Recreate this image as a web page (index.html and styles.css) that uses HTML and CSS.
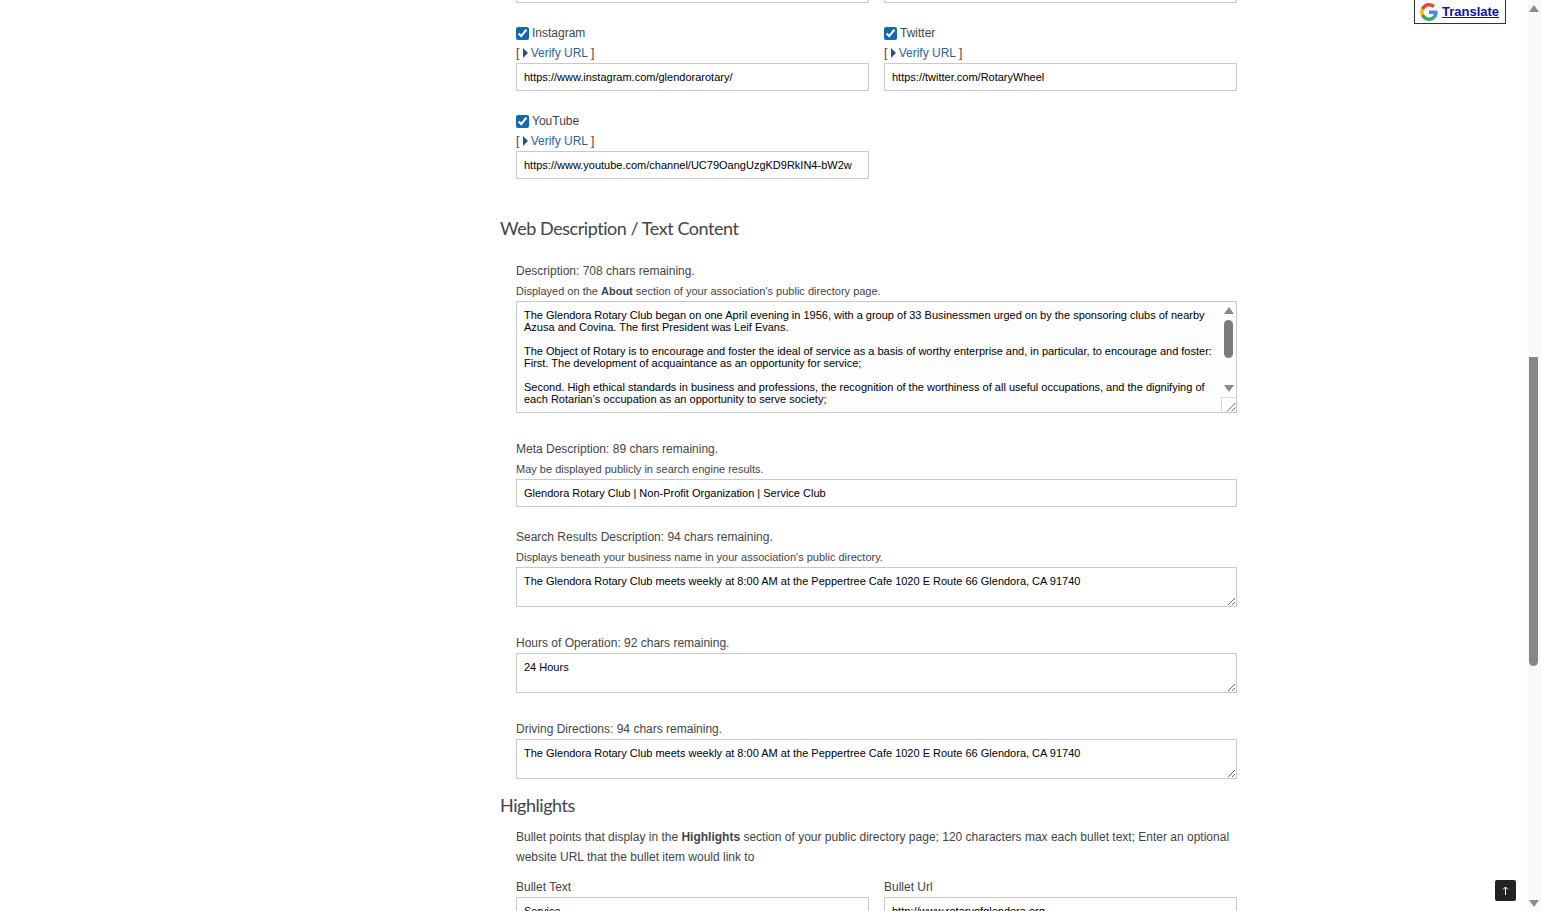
FILE: index.html
```html
<!DOCTYPE html>
<html lang="en">
<head>
    <meta charset="UTF-8">
    <title>Edit Listing</title>
    <link rel="stylesheet" href="styles.css">
</head>
<body>

    <div class="page">
        <div class="form-column">

            <div class="field-row field-row-cut">
                <div class="field"><input type="text" class="text-input"></div>
                <div class="field"><input type="text" class="text-input"></div>
            </div>

            <div class="field-row">
                <div class="field">
                    <label class="check-label"><input type="checkbox" checked> Instagram</label>
                    <div class="verify">[ <a href="#"><span class="verify-arrow"></span>Verify URL</a> ]</div>
                    <input type="text" class="text-input" value="https://www.instagram.com/glendorarotary/">
                </div>
                <div class="field">
                    <label class="check-label"><input type="checkbox" checked> Twitter</label>
                    <div class="verify">[ <a href="#"><span class="verify-arrow"></span>Verify URL</a> ]</div>
                    <input type="text" class="text-input" value="https://twitter.com/RotaryWheel">
                </div>
            </div>

            <div class="field-row">
                <div class="field">
                    <label class="check-label"><input type="checkbox" checked> YouTube</label>
                    <div class="verify">[ <a href="#"><span class="verify-arrow"></span>Verify URL</a> ]</div>
                    <input type="text" class="text-input" value="https://www.youtube.com/channel/UC79OangUzgKD9RkIN4-bW2w">
                </div>
            </div>

            <h2 class="section-title section-web">Web Description / Text Content</h2>

            <div class="block">
                <div class="label">Description: 708 chars remaining.</div>
                <div class="hint">Displayed on the <b>About</b> section of your association's public directory page.</div>
                <div class="area-wrap">
                    <textarea class="text-area area-description">The Glendora Rotary Club began on one April evening in 1956, with a group of 33 Businessmen urged on by the sponsoring clubs of nearby Azusa and Covina. The first President was Leif Evans.

The Object of Rotary is to encourage and foster the ideal of service as a basis of worthy enterprise and, in particular, to encourage and foster:
First. The development of acquaintance as an opportunity for service;

Second. High ethical standards in business and professions, the recognition of the worthiness of all useful occupations, and the dignifying of each Rotarian’s occupation as an opportunity to serve society;</textarea>
                    <div class="area-scroll">
                        <span class="tri tri-up"></span>
                        <span class="area-thumb"></span>
                        <span class="tri tri-down"></span>
                    </div>
                    <div class="area-grip">
                        <svg width="14" height="14" viewBox="0 0 14 14"><path d="M5 13.500 13.500 5M9.500 13.500l4-4" stroke="#666" stroke-width="1" fill="none"/></svg>
                    </div>
                </div>
            </div>

            <div class="block block-input">
                <div class="label">Meta Description: 89 chars remaining.</div>
                <div class="hint">May be displayed publicly in search engine results.</div>
                <input type="text" class="text-input" value="Glendora Rotary Club | Non-Profit Organization | Service Club">
            </div>

            <div class="block">
                <div class="label">Search Results Description: 94 chars remaining.</div>
                <div class="hint">Displays beneath your business name in your association's public directory.</div>
                <textarea class="text-area">The Glendora Rotary Club meets weekly at 8:00 AM at the Peppertree Cafe 1020 E Route 66 Glendora, CA 91740</textarea>
            </div>

            <div class="block">
                <div class="label">Hours of Operation: 92 chars remaining.</div>
                <textarea class="text-area">24 Hours</textarea>
            </div>

            <div class="block block-last">
                <div class="label">Driving Directions: 94 chars remaining.</div>
                <textarea class="text-area">The Glendora Rotary Club meets weekly at 8:00 AM at the Peppertree Cafe 1020 E Route 66 Glendora, CA 91740</textarea>
            </div>

            <h2 class="section-title section-highlights">Highlights</h2>

            <p class="intro">Bullet points that display in the <b>Highlights</b> section of your public directory page; 120 characters max each bullet text; Enter an optional website URL that the bullet item would link to</p>

            <div class="field-row">
                <div class="field">
                    <div class="label">Bullet Text</div>
                    <input type="text" class="text-input" value="Service">
                </div>
                <div class="field">
                    <div class="label">Bullet Url</div>
                    <input type="text" class="text-input" value="http://www.rotaryofglendora.org">
                </div>
            </div>

        </div>

        <div class="page-scroll">
            <span class="tri tri-up"></span>
            <span class="page-thumb"></span>
            <span class="tri tri-down"></span>
        </div>
    </div>

    <div class="translate-badge">
        <svg width="18" height="18" viewBox="0 0 48 48">
            <path fill="#EA4335" d="M24 9.500c3.500 0 6.700 1.300 9.100 3.500l6.800-6.800C35.800 2.400 30.300 0 24 0 14.600 0 6.500 5.400 2.600 13.200l7.900 6.100C12.400 13.700 17.700 9.500 24 9.500z"/>
            <path fill="#4285F4" d="M47 24.500c0-1.600-.1-3.100-.4-4.500H24v9h12.900c-.6 3-2.300 5.500-4.800 7.200l7.700 6C44.300 37.900 47 31.800 47 24.500z"/>
            <path fill="#FBBC05" d="M10.500 28.700c-.5-1.500-.8-3-.8-4.700s.3-3.200.8-4.700l-7.900-6.100C.9 16.500 0 20.100 0 24s.9 7.500 2.600 10.800l7.900-6.100z"/>
            <path fill="#34A853" d="M24 48c6.500 0 11.900-2.100 15.800-5.800l-7.700-6c-2.100 1.400-4.900 2.300-8.100 2.300-6.300 0-11.600-4.200-13.500-9.800l-7.900 6.100C6.500 42.600 14.600 48 24 48z"/>
        </svg>
        <a href="#">Translate</a>
    </div>

    <button class="to-top">
        <svg width="7" height="9" viewBox="0 0 7 9"><path d="M3.500 9V1M1 3.500 3.500 1 6 3.500" stroke="#fff" stroke-width="1" fill="none"/></svg>
    </button>

</body>
</html>
```

FILE: styles.css
```css
html, body {
    margin: 0;
    height: 100%;
    overflow: hidden;
    background-color: #fff;
}
body {
    font-family: "Liberation Sans", Arial, sans-serif;
    font-size: 12px;
    color: #444;
}
a {
    color: #2a6592;
    text-decoration: none;
}

.page {
    display: flex;
    height: 911px;
}
.form-column {
    flex: 1;
    padding-left: 500px;
    overflow: hidden;
}

/* two column rows */
.field-row {
    display: flex;
    gap: 15px;
    width: 721px;
    margin-left: 16px;
    margin-bottom: 20px;
}
.field-row-cut {
    margin-top: -25px;
}
.field {
    width: 353px;
}
.check-label {
    display: flex;
    align-items: center;
    height: 20px;
    line-height: 20px;
    gap: 3px;
}
.check-label input {
    width: 13px;
    height: 13px;
    margin: 1px 0 0 0;
    accent-color: #1268b3;
}
.verify {
    height: 20px;
    line-height: 20px;
}
.verify-arrow {
    display: inline-block;
    width: 0;
    height: 0;
    margin: 0 3px 0 0;
    vertical-align: -1px;
    border-left: 5px solid #1d5b79;
    border-top: 5px solid transparent;
    border-bottom: 5px solid transparent;
}

.text-input {
    display: block;
    box-sizing: border-box;
    width: 100%;
    height: 28px;
    padding: 0 7px;
    margin: 0;
    border: 1px solid #c8c8c8;
    outline: none;
    background-color: #fff;
    color: #000;
    font-family: "Liberation Sans", Arial, sans-serif;
    font-size: 11px;
}

.section-title {
    margin: 0;
    height: 30px;
    line-height: 30px;
    font-family: Lato, "Liberation Sans", sans-serif;
    font-size: 18px;
    font-weight: normal;
    letter-spacing: -0.45px;
    word-spacing: 0;
    color: #444;
}
.section-web {
    margin-top: 34px;
    margin-bottom: 18px;
}
.section-highlights {
    margin-top: 11px;
    margin-bottom: 7px;
}

.block {
    width: 721px;
    margin-left: 16px;
    margin-bottom: 26px;
}
.block-input {
    margin-bottom: 20px;
}
.block-last {
    margin-bottom: 0;
}
.label {
    height: 20px;
    line-height: 20px;
}
.hint {
    height: 20px;
    line-height: 20px;
    font-size: 11px;
}

.text-area {
    display: block;
    box-sizing: border-box;
    width: 100%;
    height: 40px;
    padding: 7px;
    margin: 0;
    border: 1px solid #c8c8c8;
    outline: none;
    resize: vertical;
    background-color: #fff;
    color: #000;
    font-family: "Liberation Sans", Arial, sans-serif;
    font-size: 11px;
    line-height: 12px;
}
.area-wrap {
    position: relative;
}
.area-description {
    height: 112px;
    padding-right: 22px;
    overflow: hidden;
    resize: none;
    background-color: #fdfdfd;
}
.area-scroll {
    position: absolute;
    top: 1px;
    right: 1px;
    width: 15px;
    height: 94px;
    display: flex;
    flex-direction: column;
    align-items: center;
}
.area-thumb {
    width: 9px;
    height: 38px;
    margin: 6px 0 auto;
    border-radius: 5px;
    background-color: #7c7c7c;
}
.area-grip {
    position: absolute;
    right: 1px;
    bottom: 1px;
    box-sizing: border-box;
    width: 15px;
    height: 15px;
    border-left: 1px solid #d8d8d8;
    border-top: 1px solid #d8d8d8;
    background-color: #fff;
}
.area-grip svg {
    display: block;
}

.intro {
    width: 721px;
    margin: 0 0 10px 16px;
    line-height: 20px;
}

/* arrows on both scrollbars */
.tri {
    display: block;
    width: 0;
    height: 0;
    border-left: 5px solid transparent;
    border-right: 5px solid transparent;
}
.tri-up {
    margin-top: 5px;
    border-bottom: 7px solid #8a8a8a;
}
.tri-down {
    margin-bottom: 4px;
    border-top: 7px solid #8a8a8a;
}

.page-scroll {
    flex: none;
    box-sizing: border-box;
    width: 14px;
    height: 911px;
    padding-left: 2px;
    display: flex;
    flex-direction: column;
    align-items: flex-start;
    background-color: #fafafa;
}
.page-thumb {
    width: 9px;
    height: 309px;
    margin: 345px 0 auto;
    border-radius: 0 0 5px 5px;
    background-color: #868686;
}

.translate-badge {
    position: fixed;
    top: -2px;
    left: 1414px;
    box-sizing: border-box;
    width: 92px;
    height: 26px;
    display: flex;
    align-items: center;
    gap: 4px;
    padding: 1px 0 0 5px;
    border: 1px solid #333;
    background-color: #fff;
}
.translate-badge a {
    color: #11119a;
    font-size: 13px;
    font-weight: bold;
    text-decoration: underline;
}

.to-top {
    position: fixed;
    left: 1495px;
    top: 880px;
    width: 21px;
    height: 21px;
    padding: 0;
    display: flex;
    align-items: center;
    justify-content: center;
    border: none;
    border-radius: 2px;
    background-color: #222;
}
```
